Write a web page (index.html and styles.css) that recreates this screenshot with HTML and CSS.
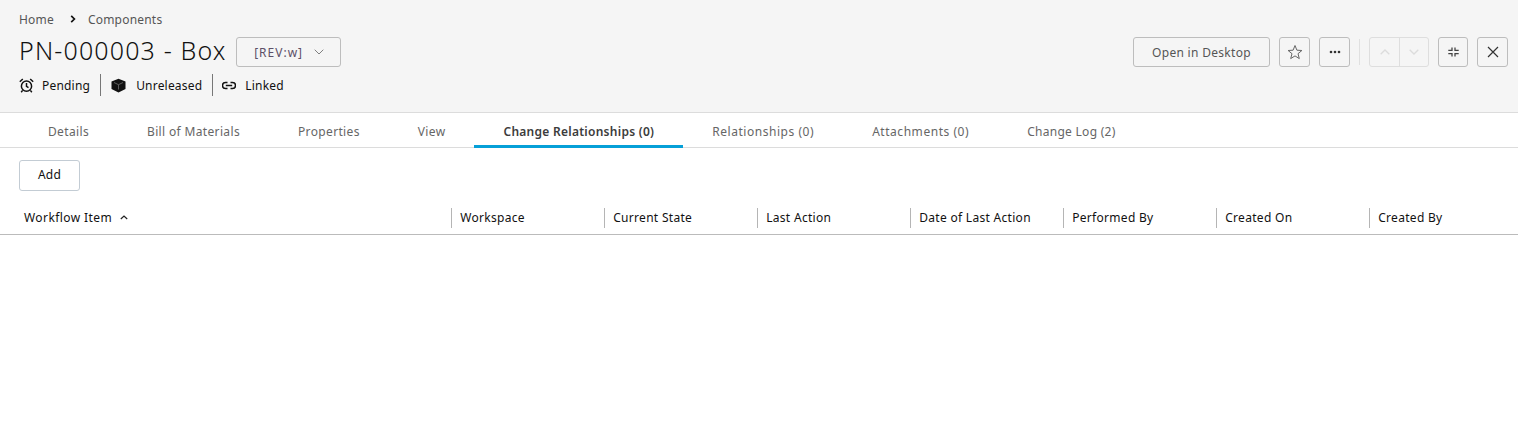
FILE: index.html
```html
<!DOCTYPE html>
<html lang="en">
<head>
<meta charset="utf-8">
<title>PN-000003 - Box</title>
<link rel="stylesheet" href="styles.css">
</head>
<body>
<header class="header">
  <div class="header-left">
    <nav class="crumbs">
      <span>Home</span>
      <svg class="crumb-sep" width="6" height="8" viewBox="0 0 6 8"><path d="M1.2 .8 4.4 4 1.2 7.2" fill="none" stroke="#111" stroke-width="1.7"/></svg>
      <span>Components</span>
    </nav>
    <div class="title-row">
      <h1 class="title">PN-000003 - Box</h1>
      <button class="rev"><span class="rev-text">[REV:w]</span>
        <svg width="10" height="6" viewBox="0 0 10 6"><path d="M.7.7 5 5 9.3.7" fill="none" stroke="#808080" stroke-width="1"/></svg>
      </button>
    </div>
    <div class="status-row">
      <div class="status">
        <svg class="status-icon" width="15" height="15" viewBox="0 0 15 15" fill="none" stroke="#111" stroke-width="1.5"><circle cx="7.5" cy="8.2" r="5.1"/><path d="M7.500 5v3.400l2 1.300M.8 3.800 3.800 1M14.200 3.800 11.200 1M3.600 12.400l-1.400 1.800M11.400 12.400l1.400 1.800"/></svg>
        <span>Pending</span>
      </div>
      <div class="status status-cube">
        <svg class="status-icon" width="15" height="15" viewBox="0 0 15 15"><path d="M7.500.8 14.500 3.600V11L7.500 14.500.5 11V3.600Z" fill="#111"/><path d="M3 4.500 7.500 6.700 12 4.500M7.500 6.700V11.500" fill="none" stroke="#6f6f6f" stroke-width=".8"/></svg>
        <span>Unreleased</span>
      </div>
      <div class="status">
        <svg class="status-icon" width="14" height="15" viewBox="0 0 14 15" fill="none" stroke="#111" stroke-width="1.500"><path d="M5.500 4.500H3.500a3 3 0 0 0 0 6h2M8.500 4.500h2a3 3 0 0 1 0 6h-2M3.800 7.500h6.400"/></svg>
        <span>Linked</span>
      </div>
    </div>
  </div>
  <div class="actions">
    <button class="btn btn-open">Open in Desktop</button>
    <button class="btn btn-icon"><svg width="16" height="16" viewBox="0 0 16 16"><path d="M8 1.500 9.900 6.200l5 .3-3.900 3.200 1.300 4.900L8 11.900l-4.300 2.700L5 9.700 1.100 6.500l5-.3Z" fill="none" stroke="#666" stroke-width="1"/></svg></button>
    <button class="btn btn-icon"><svg width="12" height="4" viewBox="0 0 12 4"><g fill="#333"><circle cx="2" cy="2" r="1.300"/><circle cx="6" cy="2" r="1.300"/><circle cx="10" cy="2" r="1.300"/></g></svg></button>
    <span class="divider"></span>
    <div class="pager">
      <button class="page"><svg width="10" height="6" viewBox="0 0 10 6"><path d="M.7 5.300 5 1l4.300 4.300" fill="none" stroke="#dcdcdc" stroke-width="1.300"/></svg></button>
      <button class="page page-next"><svg width="10" height="6" viewBox="0 0 10 6"><path d="M.7.7 5 5 9.300.7" fill="none" stroke="#dcdcdc" stroke-width="1.300"/></svg></button>
    </div>
    <button class="btn btn-icon btn-min"><svg width="11" height="10" viewBox="0 0 11 10"><path d="M4 .5V3.400H.3M7 .5V3.400H10.700M4 9.500V6.600H.3M7 9.500V6.600H10.700" fill="none" stroke="#444" stroke-width="1.300"/></svg></button>
    <button class="btn btn-icon"><svg width="12" height="12" viewBox="0 0 12 12"><path d="M1 1l10 10M11 1 1 11" fill="none" stroke="#333" stroke-width="1.200"/></svg></button>
  </div>
</header>
<nav class="tabs">
  <a class="tab">Details</a>
  <a class="tab">Bill of Materials</a>
  <a class="tab">Properties</a>
  <a class="tab">View</a>
  <a class="tab tab-active">Change Relationships (0)</a>
  <a class="tab tab-count">Relationships (0)</a>
  <a class="tab tab-count">Attachments (0)</a>
  <a class="tab tab-log">Change Log (2)</a>
</nav>
<div class="toolbar"><button class="add">Add</button></div>
<div class="thead">
  <div class="th th-first">Workflow Item
    <svg class="sort" width="8" height="5" viewBox="0 0 8 5"><path d="M.8 4 4 1l3.200 3" fill="none" stroke="#222" stroke-width="1.200"/></svg>
  </div>
  <div class="th">Workspace</div>
  <div class="th">Current State</div>
  <div class="th">Last Action</div>
  <div class="th">Date of Last Action</div>
  <div class="th">Performed By</div>
  <div class="th">Created On</div>
  <div class="th">Created By</div>
</div>
</body>
</html>
```
FILE: styles.css
```css
* { box-sizing: border-box; }
html, body { margin: 0; padding: 0; }
body {
  background: #fff;
  color: #3c3c3c;
  font-family: "Noto Sans", "Open Sans", sans-serif;
  font-size: 12px;
  letter-spacing: .2px;
  height: 445px;
  overflow: hidden;
}
button { font-family: inherit; letter-spacing: inherit; background: none; cursor: pointer; }

.header {
  height: 113px;
  background: #f5f5f5;
  border-bottom: 1px solid #dcdcdc;
  display: flex;
  justify-content: space-between;
  padding: 0 10px 0 19px;
}
.crumbs {
  display: flex;
  align-items: center;
  height: 16px;
  margin-top: 11px;
  color: #555;
}
.crumb-sep { margin: 0 12px 0 16px; }
.title-row { display: flex; align-items: center; margin-top: 10px; height: 30px; }
.title {
  margin: 0 0 4px;
  font-size: 25px;
  font-weight: 300;
  color: #111;
  letter-spacing: 1.15px;
  line-height: 26px;
}
.rev {
  margin-left: 9px;
  width: 105px;
  height: 30px;
  border: 1px solid #bdbdbd;
  border-radius: 3px;
  color: #5d5068;
  font-size: 12px;
  letter-spacing: 1px;
  display: flex;
  align-items: center;
  justify-content: center;
  gap: 11px;
  padding: 0 0 0 2px;
}
.status-row { display: flex; align-items: center; margin-top: 7px; height: 22px; }
.status {
  display: flex;
  align-items: center;
  height: 22px;
  color: #111;
  padding-right: 10px;
  margin-right: 10px;
  border-right: 1px solid #777;
}
.status:last-child { border-right: 0; }
.status-icon { margin-right: 8px; }
.status-cube { margin-right: 9px; }
.status-cube .status-icon { margin-right: 10px; }
.status:last-child .status-icon { margin-right: 9px; }

.actions { display: flex; align-items: center; height: 30px; margin-top: 37px; }
.btn {
  height: 30px;
  border: 1px solid #bdbdbd;
  border-radius: 3px;
  color: #555;
  font-size: 12px;
  letter-spacing: .3px;
  padding: 0;
  display: flex;
  align-items: center;
  justify-content: center;
}
.btn-open { width: 137px; }
.btn-icon { width: 31px; margin-left: 9px; }
.divider { width: 1px; height: 26px; background: #e0e0e0; margin: 0 9px 0 9px; }
.pager { display: flex; height: 30px; border: 1px solid #dedede; border-radius: 3px; }
.page { width: 29px; border: 0; padding: 0; display: flex; align-items: center; justify-content: center; }
.page-next { border-left: 1px solid #dedede; }
.btn-min { width: 30px; margin-left: 9px; }

.tabs {
  display: flex;
  height: 35px;
  border-bottom: 1px solid #dcdcdc;
  padding-left: 19px;
  letter-spacing: .35px;
}
.tab {
  height: 35px;
  padding: 0 29px;
  line-height: 38px;
  color: #666;
}
.tab-count { letter-spacing: .54px; }
.tab-log { letter-spacing: .28px; }
.tab-active {
  color: #3c3c3c;
  font-weight: 600;
  letter-spacing: .27px;
  border-bottom: 3px solid #06a0d8;
}

.toolbar { padding: 12px 19px 0; }
.add {
  width: 61px;
  height: 31px;
  border: 1px solid #c3ccd4;
  border-radius: 3px;
  color: #111;
  font-size: 12px;
  padding: 0 0 2px;
}
.thead {
  display: grid;
  grid-template-columns: 451px repeat(6, 153px) 1fr;
  height: 44px;
  padding-top: 17px;
  padding-bottom: 6px;
  border-bottom: 1px solid #bbb;
  color: #111;
  letter-spacing: .3px;
}
.th {
  height: 20px;
  line-height: 19px;
  padding-left: 8.2px;
  border-left: 1px solid #b5b5b5;
}
.th-first { border-left: 0; padding-left: 24px; letter-spacing: .42px; }
.sort { margin-left: 4px; vertical-align: 2px; }
```
